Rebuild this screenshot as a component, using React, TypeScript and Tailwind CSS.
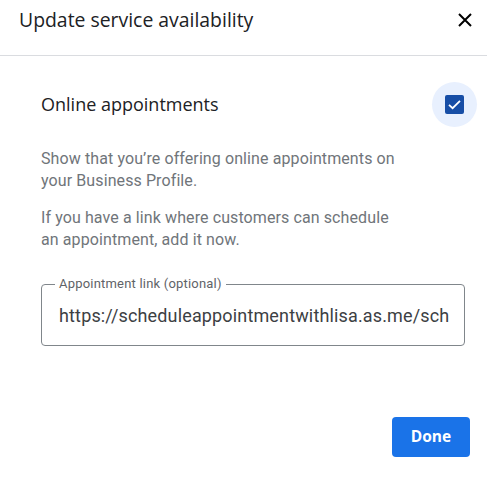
import React from "react";

export default function App() {
  return (
    <div className="w-[487px] h-[489px] bg-white relative" style={{ fontFamily: "Roboto, 'Liberation Sans', sans-serif" }}>
      <div className="h-[56px] border-b border-[#dadce0]">
        <div className="h-[40px] flex items-center justify-between pl-[19px] pr-[14px]">
          <h1 className="text-[19.4px] text-[#202124] leading-none" style={{ fontFamily: "'Open Sans', sans-serif" }}>
            Update service availability
          </h1>
          <button className="w-[16px] h-[16px] flex items-center justify-center">
            <svg width="14" height="14" viewBox="0 0 14 14">
              <path d="M1 1 L13 13 M13 1 L1 13" stroke="#000" strokeWidth="2" />
            </svg>
          </button>
        </div>
      </div>
      <div className="pl-[41px] pr-[10px] pt-[26px]">
        <div className="flex items-center justify-between h-[45px]">
          <span className="text-[18px] text-[#202124]" style={{ fontFamily: "'Open Sans', sans-serif" }}>
            Online appointments
          </span>
          <div className="w-[45px] h-[45px] rounded-full bg-[#e8f0fe] flex items-center justify-center">
            <div className="w-[19px] h-[19px] rounded-[2px] bg-[#174ea6] flex items-center justify-center">
              <svg width="15" height="15" viewBox="0 0 15 15">
                <path d="M2 7.8 L5.6 11.2 L13 3.8" stroke="#fff" strokeWidth="1.8" fill="none" />
              </svg>
            </div>
          </div>
        </div>
        <p className="mt-[21px] w-[365px] text-[16px] tracking-[0.1px] leading-[22px] text-[#70757a]">
          Show that you’re offering online appointments on your Business Profile.
        </p>
        <p className="mt-[15px] w-[365px] text-[16px] tracking-[0.1px] leading-[22px] text-[#70757a]">
          If you have a link where customers can schedule an appointment, add it now.
        </p>
      </div>
      <div className="pl-[41px] pr-[22px] mt-[33px]">
        <div className="relative h-[62px] border border-[#80868b] rounded-[4px] flex items-center pl-[17px] pr-[4px] overflow-visible">
          <span className="absolute -top-[9px] left-[13px] px-[4px] bg-white text-[13px] tracking-[0.2px] leading-[16px] text-[#5f6368]">
            Appointment link (optional)
          </span>
          <span className="text-[18px] tracking-[0.15px] text-[#3c4043] whitespace-nowrap overflow-hidden">
            https://scheduleappointmentwithlisa.as.me/sch
          </span>
        </div>
      </div>
      <div className="flex justify-end pr-[17px] mt-[71px]">
        <button className="w-[78px] h-[40px] rounded-[4px] bg-[#1a73e8] text-white text-[15.5px] font-bold" style={{ fontFamily: "'Open Sans', sans-serif" }}>
          Done
        </button>
      </div>
    </div>
  );
}
